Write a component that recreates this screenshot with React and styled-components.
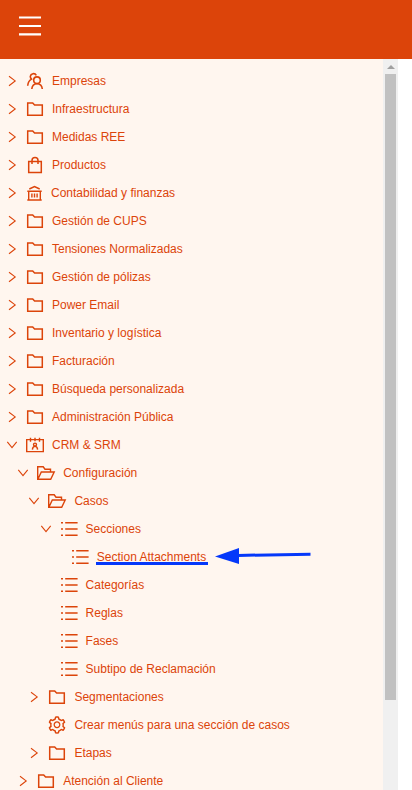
import React from "react";
import styled, { createGlobalStyle } from "styled-components";
import { AiOutlineSetting } from "react-icons/ai";

const GlobalStyle = createGlobalStyle`
  * { box-sizing: border-box; }
  body { margin: 0; background: #fff; font-family: "Liberation Sans", Arial, sans-serif; }
`;

const Page = styled.div`
  height: 790px;
  width: 412px;
  display: flex;
  flex-direction: column;
  overflow: hidden;
  background: #fff;
`;

const Header = styled.header`
  flex: none;
  height: 59px;
  background: #dc440a;
  padding: 16px 0 0 19px;
`;

const MenuButton = styled.button`
  display: block;
  padding: 0;
  border: 0;
  background: none;
  color: #fff;
  svg { display: block; }
`;

const Body = styled.div`
  flex: 1;
  min-height: 0;
  display: flex;
`;

const Sidebar = styled.nav`
  width: 383px;
  padding-top: 8px;
  background: #fff6ef;
  overflow: hidden;
`;

const Row = styled.div`
  display: flex;
  align-items: center;
  height: 28px;
  padding-left: ${(p) => 4 + p.$level * 11.2}px;
  color: #dc440a;
  font-size: 12px;
  line-height: 28px;
  white-space: nowrap;
`;

const Toggle = styled.span`
  flex: none;
  width: 16px;
  height: 16px;
  svg { display: block; }
`;

const IconBox = styled.span`
  flex: none;
  width: 18px;
  height: 18px;
  margin: 0 ${(p) => (p.$tight ? 7 : 8)}px 0 6px;
  svg { display: block; overflow: visible; }
`;

const GearIcon = styled(AiOutlineSetting)`
  width: 20px;
  height: 20px;
  margin: -1px;
`;

const Label = styled.span`
  position: relative;
`;

const Underline = styled.span`
  position: absolute;
  left: -1px;
  right: -1.5px;
  top: 19px;
  height: 3px;
  background: #0538fa;
`;

const Arrow = styled.svg`
  position: absolute;
  left: 118px;
  top: 2px;
`;

const Scrollbar = styled.div`
  width: 15px;
  background: #f0f0f0;
  display: flex;
  flex-direction: column;
  align-items: center;
`;

const ScrollUp = styled.div`
  height: 15px;
  padding-top: 6px;
  svg { display: block; }
`;

const Thumb = styled.div`
  width: 11px;
  height: 626px;
  background: #c1c1c1;
`;

const Glyph = ({ children, w = 1.4 }) => (
  <svg width="18" height="18" viewBox="0 0 18 18" fill="none" stroke="currentColor" strokeWidth={w}>
    {children}
  </svg>
);

const icons = {
  folder: (
    <Glyph w={1.5}>
      <path d="M1.7 3h5l1.9 2.1h7.7v10.2H1.7z" />
    </Glyph>
  ),
  open: (
    <Glyph>
      <path d="M13.500 8V5.200H8L6.200 2.800H.7v12.500h13L17.200 8H4.300L1 15" />
    </Glyph>
  ),
  people: (
    <Glyph w={1.6}>
      <circle cx="11" cy="8.200" r="3.300" />
      <path d="M5.800 17c.3-3.200 2.300-5.300 5.200-5.300s5 2.100 5.300 5.300M10.300 3.400A3.200 3.200 0 0 0 4.300 4.400c0 1.100.4 1.900 1.200 2.700C3.300 8.300 1.900 10.600 1.700 13.800" />
    </Glyph>
  ),
  bag: (
    <Glyph w={1.5}>
      <path d="M2.700 5.400h12.600v11.200H2.700zM6 8V4.500a3 3 0 0 1 6 0V8" />
    </Glyph>
  ),
  bank: (
    <Glyph w={1.4}>
      <path d="M3.300 5L8.500 2.600 13.700 5M1.300 7.200h14.400M2.700 7.200v8.500M14.300 7.200v8.500M1.300 16h14.400M5.900 9.500v4M8.500 9.500v4M11.100 9.500v4" />
    </Glyph>
  ),
  calendar: (
    <Glyph w={1.4}>
      <path d="M.7 3.600h16.600v12H.7zM4.500 1.800v4M9 1.800v3.500M13.500 1.800v4" />
      <circle cx="9" cy="8.600" r="1.500" />
      <path d="M6.400 13.600c.1-2 1-3.200 2.600-3.200s2.500 1.200 2.600 3.200" />
    </Glyph>
  ),
  list: (
    <Glyph w={1.5}>
      <path d="M1 2.700h2M5.200 2.700h12.400M1 9h2M5.200 9h12.400M1 15.200h2M5.200 15.200h12.400" />
    </Glyph>
  ),
  gear: <GearIcon />,
};

const items = [
  [0, "right", "people", "Empresas"],
  [0, "right", "folder", "Infraestructura"],
  [0, "right", "folder", "Medidas REE"],
  [0, "right", "bag", "Productos"],
  [0, "right", "bank", "Contabilidad y finanzas"],
  [0, "right", "folder", "Gestión de CUPS"],
  [0, "right", "folder", "Tensiones Normalizadas"],
  [0, "right", "folder", "Gestión de pólizas"],
  [0, "right", "folder", "Power Email"],
  [0, "right", "folder", "Inventario y logística"],
  [0, "right", "folder", "Facturación"],
  [0, "right", "folder", "Búsqueda personalizada"],
  [0, "right", "folder", "Administración Pública"],
  [0, "down", "calendar", "CRM & SRM"],
  [1, "down", "open", "Configuración"],
  [2, "down", "open", "Casos"],
  [3, "down", "list", "Secciones"],
  [4, null, "list", "Section Attachments", true],
  [3, null, "list", "Categorías"],
  [3, null, "list", "Reglas"],
  [3, null, "list", "Fases"],
  [3, null, "list", "Subtipo de Reclamación"],
  [2, "right", "folder", "Segmentaciones"],
  [2, null, "gear", "Crear menús para una sección de casos"],
  [2, "right", "folder", "Etapas"],
  [1, "right", "folder", "Atención al Cliente"],
];

function Chevron({ dir }) {
  if (!dir) return null;
  return (
    <svg width="16" height="16" viewBox="0 0 16 16" fill="none" stroke="currentColor" strokeWidth="1.1">
      <path d={dir === "right" ? "M5 3.200l6.200 4.700L5 12.700" : "M3.300 4.800L8 10.600l4.700-5.800"} />
    </svg>
  );
}

function Callout() {
  return (
    <>
      <Underline />
      <Arrow width="98" height="20" viewBox="0 0 98 20">
        <path d="M23 10.400L95.500 9.200" stroke="#0538fa" strokeWidth="3" />
        <path d="M0 11.400L24 3V19z" fill="#0538fa" />
      </Arrow>
    </>
  );
}

export default function App() {
  return (
    <Page>
      <GlobalStyle />
      <Header>
        <MenuButton aria-label="Menú">
          <svg width="22" height="20" viewBox="0 0 22 20" stroke="currentColor" strokeWidth="2.2">
            <path d="M0 1.500h22M0 10h22M0 18.400h22" />
          </svg>
        </MenuButton>
      </Header>
      <Body>
        <Sidebar>
          {items.map(([level, dir, icon, text, marked]) => (
            <Row key={text} $level={level}>
              <Toggle><Chevron dir={dir} /></Toggle>
              <IconBox $tight={icon === "bank"}>{icons[icon]}</IconBox>
              <Label>
                {text}
                {marked && <Callout />}
              </Label>
            </Row>
          ))}
        </Sidebar>
        <Scrollbar>
          <ScrollUp>
            <svg width="8" height="4" viewBox="0 0 8 4"><path d="M0 4L4 0l4 4z" fill="#a0a0a0" /></svg>
          </ScrollUp>
          <Thumb />
        </Scrollbar>
      </Body>
    </Page>
  );
}
